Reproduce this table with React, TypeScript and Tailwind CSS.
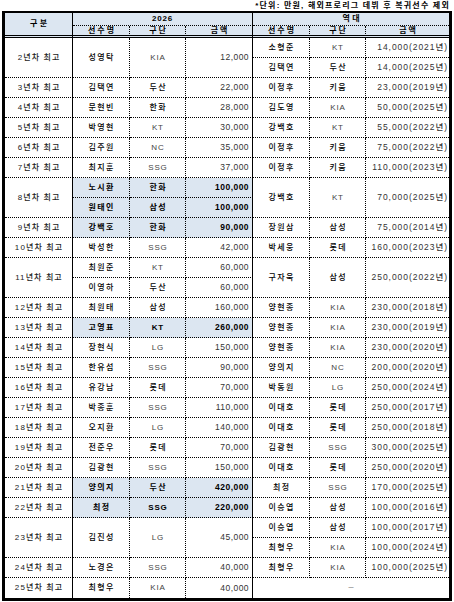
import React from "react";

type E = [string, string, string, boolean?];
type R = { l: string; a: E[]; b: E[] | null };

const rows: R[] = [
  { l: "2년차 최고", a: [["성영탁", "KIA", "12,000"]], b: [["소형준", "KT", "14,000(2021년)"], ["김택연", "두산", "14,000(2025년)"]] },
  { l: "3년차 최고", a: [["김택연", "두산", "22,000"]], b: [["이정후", "키움", "23,000(2019년)"]] },
  { l: "4년차 최고", a: [["문현빈", "한화", "28,000"]], b: [["김도영", "KIA", "50,000(2025년)"]] },
  { l: "5년차 최고", a: [["박영현", "KT", "30,000"]], b: [["강백호", "KT", "55,000(2022년)"]] },
  { l: "6년차 최고", a: [["김주원", "NC", "35,000"]], b: [["이정후", "키움", "75,000(2022년)"]] },
  { l: "7년차 최고", a: [["최지훈", "SSG", "37,000"]], b: [["이정후", "키움", "110,000(2023년)"]] },
  { l: "8년차 최고", a: [["노시환", "한화", "100,000", true], ["원태인", "삼성", "100,000", true]], b: [["강백호", "KT", "70,000(2025년)"]] },
  { l: "9년차 최고", a: [["강백호", "한화", "90,000", true]], b: [["장원삼", "삼성", "75,000(2014년)"]] },
  { l: "10년차 최고", a: [["박성한", "SSG", "42,000"]], b: [["박세웅", "롯데", "160,000(2023년)"]] },
  { l: "11년차 최고", a: [["최원준", "KT", "60,000"], ["이영하", "두산", "60,000"]], b: [["구자욱", "삼성", "250,000(2022년)"]] },
  { l: "12년차 최고", a: [["최원태", "삼성", "160,000"]], b: [["양현종", "KIA", "230,000(2018년)"]] },
  { l: "13년차 최고", a: [["고영표", "KT", "260,000", true]], b: [["양현종", "KIA", "230,000(2019년)"]] },
  { l: "14년차 최고", a: [["장현식", "LG", "150,000"]], b: [["양현종", "KIA", "230,000(2020년)"]] },
  { l: "15년차 최고", a: [["한유섬", "SSG", "90,000"]], b: [["양의지", "NC", "200,000(2020년)"]] },
  { l: "16년차 최고", a: [["유강남", "롯데", "70,000"]], b: [["박동원", "LG", "250,000(2024년)"]] },
  { l: "17년차 최고", a: [["박종훈", "SSG", "110,000"]], b: [["이대호", "롯데", "250,000(2017년)"]] },
  { l: "18년차 최고", a: [["오지환", "LG", "140,000"]], b: [["이대호", "롯데", "250,000(2018년)"]] },
  { l: "19년차 최고", a: [["전준우", "롯데", "70,000"]], b: [["김광현", "SSG", "300,000(2025년)"]] },
  { l: "20년차 최고", a: [["김광현", "SSG", "150,000"]], b: [["이대호", "롯데", "250,000(2020년)"]] },
  { l: "21년차 최고", a: [["양의지", "두산", "420,000", true]], b: [["최정", "SSG", "170,000(2025년)"]] },
  { l: "22년차 최고", a: [["최정", "SSG", "220,000", true]], b: [["이승엽", "삼성", "100,000(2016년)"]] },
  { l: "23년차 최고", a: [["김진성", "LG", "45,000"]], b: [["이승엽", "삼성", "100,000(2017년)"], ["최형우", "KIA", "100,000(2024년)"]] },
  { l: "24년차 최고", a: [["노경은", "SSG", "40,000"]], b: [["최형우", "KIA", "100,000(2025년)"]] },
  { l: "25년차 최고", a: [["최형우", "KIA", "40,000"]], b: null },
];

const BB = "border-b border-b-black [border-bottom-style:dotted]";
const RS = "border-r border-r-black";
const RD = "border-r border-r-black [border-right-style:dotted]";
const HB = "border-b-[3px] border-b-black [border-bottom-style:double]";
const BG = "bg-[#dce6f1]";

const isKo = (s: string) => /[가-힣]/.test(s);

export default function App() {
  const cells: React.ReactNode[] = [];
  let k = 0;

  const push = (content: React.ReactNode, cls: string) => {
    cells.push(
      <div key={k++} className={"flex items-center whitespace-nowrap overflow-hidden " + cls}>
        {content}
      </div>
    );
  };

  rows.forEach((r, i) => {
    const last = i === rows.length - 1;
    const bl = r.b ? r.b.length : 1;
    const n = Math.max(r.a.length, bl);
    const bot = last ? "" : BB;
    push(r.l, `${RS} ${bot} ${n === 2 ? "row-span-2" : ""} justify-center text-[8px] tracking-[1.1px] pl-[1px] font-medium text-[#222]`);

    const side = (e: E, left: boolean, span: boolean) => {
      const sp = span ? "row-span-2" : "";
      const hl = e[3] === true;
      const bg = hl ? BG + " font-bold text-black" : "font-medium";
      push(e[0], `${RD} ${bot} ${sp} ${bg} justify-center text-[8px] tracking-[1.4px] pl-[1.4px] text-black`);
      push(
        e[1],
        `${RD} ${bot} ${sp} ${bg} justify-center ${isKo(e[1]) ? "text-[8px] tracking-[1.4px] pl-[1.4px] text-black" : "text-[8px] tracking-[0.8px] pl-[0.8px] text-[#444]"}`
      );
      push(
        e[2],
        `${left ? RS : ""} ${bot} ${sp} ${bg} justify-end text-[8.5px] ${left ? "pr-[3px] tracking-[0.45px]" : "pr-[1px] tracking-[0.95px]"} text-[#333]`
      );
    };

    side(r.a[0], true, r.a.length === 1 && n === 2);
    if (r.b) side(r.b[0], false, r.b.length === 1 && n === 2);
    else push("–", `col-span-3 ${bot} justify-center text-[9px] text-[#888]`);
    if (n === 2) {
      if (r.a.length === 2) side(r.a[1], true, false);
      if (r.b && r.b.length === 2) side(r.b[1], false, false);
    }
  });

  const H = "flex items-center justify-center font-bold text-[8px] text-black";

  return (
    <div className="w-[454px] h-[602px] bg-white overflow-hidden font-['Liberation_Sans','Noto_Sans_CJK_KR',sans-serif]">
      <div className="h-[11px] flex items-center justify-end pr-[4px] text-[8px] font-bold tracking-[1.2px] text-black whitespace-nowrap">
        *단위: 만원, 해외프로리그 데뷔 후 복귀선수 제외
      </div>
      <div className="ml-[2px] w-[450px] border-[3px] border-t-2 border-black">
        <div className="grid grid-cols-[68px_57px_56px_67px_57px_56px_83px] grid-rows-[13px_12px_repeat(28,20px)]">
          <div className={`row-span-2 ${RS} ${HB} ${BG} ${H} tracking-[2.5px] pl-[2.5px]`}>구분</div>
          <div className={`col-span-3 ${RS} ${BB} ${BG} ${H} tracking-[0.8px]`}>2026</div>
          <div className={`col-span-3 ${BB} ${BG} ${H} tracking-[2.5px] pl-[2.5px]`}>역대</div>
          <div className={`${RD} ${HB} ${BG} ${H} tracking-[2px] pl-[2px]`}>선수명</div>
          <div className={`${RD} ${HB} ${BG} ${H} tracking-[2px] pl-[2px]`}>구단</div>
          <div className={`${RS} ${HB} ${BG} ${H} tracking-[2px] pl-[2px]`}>금액</div>
          <div className={`${RD} ${HB} ${BG} ${H} tracking-[2px] pl-[2px]`}>선수명</div>
          <div className={`${RD} ${HB} ${BG} ${H} tracking-[2px] pl-[2px]`}>구단</div>
          <div className={`${HB} ${BG} ${H} tracking-[2px] pl-[2px]`}>금액</div>
          {cells}
        </div>
      </div>
    </div>
  );
}
